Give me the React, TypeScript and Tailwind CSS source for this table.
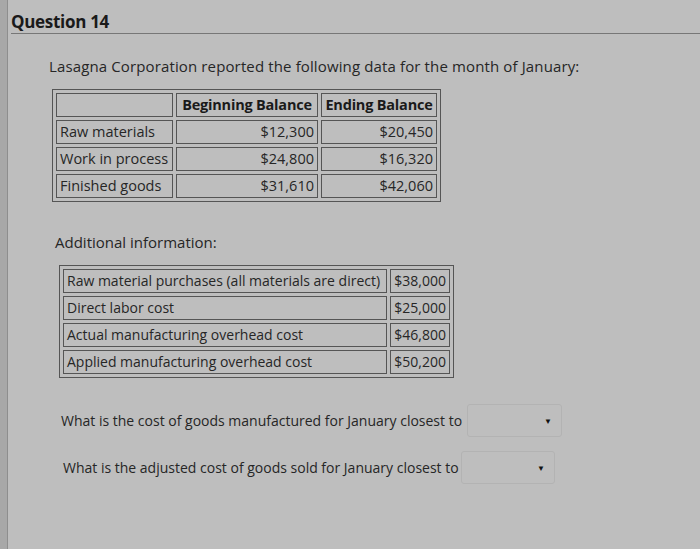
const font = { fontFamily: '"Open Sans", "Noto Sans", sans-serif' };

const balances = [
  { label: "Raw materials", begin: "$12,300", end: "$20,450" },
  { label: "Work in process", begin: "$24,800", end: "$16,320" },
  { label: "Finished goods", begin: "$31,610", end: "$42,060" },
];

const extra = [
  { label: "Raw material purchases (all materials are direct)", value: "$38,000" },
  { label: "Direct labor cost", value: "$25,000" },
  { label: "Actual manufacturing overhead cost", value: "$46,800" },
  { label: "Applied manufacturing overhead cost", value: "$50,200" },
];

const cell = "border border-[#555555] px-[3px] h-[24px] leading-[20px] p-0 whitespace-nowrap";

const Dropdown = ({ width }: { width: string }) => (
  <div className={`${width} h-[33px] shrink-0 rounded-[3px] border border-[#b3b3b3] flex items-center justify-end pr-[9px]`}>
    <span className="text-[8px] text-[#111111] leading-none">▼</span>
  </div>
);

export default function App() {
  return (
    <div
      className="w-[700px] h-[549px] overflow-hidden bg-[#bebebe] text-[#262626] flex"
      style={font}
    >
      <div className="w-[8px] h-full bg-[#a8a8a8] border-r border-[#8e8e8e] shrink-0" />
      <div className="flex-1 flex flex-col">
        <div className="ml-[3px] pt-[12px] pb-[1px] border-b border-[#777777]">
          <h1 className="text-[17px] leading-[20px] font-bold text-[#1a1a1a] tracking-[-0.3px]">
            Question 14
          </h1>
        </div>

        <p className="mt-[22px] ml-[41px] text-[15px] leading-[20px] tracking-[0.13px] whitespace-nowrap">
          Lasagna Corporation reported the following data for the month of January:
        </p>

        <table className="mt-[13px] ml-[44px] border border-[#555555] border-separate border-spacing-[3px] text-[14.5px] w-[389px] table-fixed">
          <tbody>
            <tr>
              <td className={`${cell} w-[117px]`}></td>
              <td className={`${cell} w-[142px] font-bold text-center tracking-[-0.2px] text-[#1a1a1a]`}>Beginning Balance</td>
              <td className={`${cell} font-bold text-center tracking-[-0.2px] text-[#1a1a1a]`}>Ending Balance</td>
            </tr>
            {balances.map((row) => (
              <tr key={row.label}>
                <td className={cell}>{row.label}</td>
                <td className={`${cell} text-right`}>{row.begin}</td>
                <td className={`${cell} text-right`}>{row.end}</td>
              </tr>
            ))}
          </tbody>
        </table>

        <p className="mt-[30px] ml-[47px] text-[15px] leading-[20px]">Additional information:</p>

        <table className="mt-[13px] ml-[51px] border border-[#555555] border-separate border-spacing-[3px] text-[14px] w-[395px] table-fixed">
          <tbody>
            {extra.map((row) => (
              <tr key={row.label}>
                <td className={`${cell} h-[23px]`}>{row.label}</td>
                <td className={`${cell} h-[23px] w-[60px] text-right`}>{row.value}</td>
              </tr>
            ))}
          </tbody>
        </table>

        <div className="mt-[26px] ml-[53px] flex items-center">
          <span className="text-[14px] leading-[20px] w-[406px] shrink-0 whitespace-nowrap">
            What is the cost of goods manufactured for January closest to
          </span>
          <Dropdown width="w-[95px]" />
        </div>

        <div className="mt-[14px] ml-[55px] flex items-center">
          <span className="text-[14px] leading-[20px] w-[398px] shrink-0 whitespace-nowrap">
            What is the adjusted cost of goods sold for January closest to
          </span>
          <Dropdown width="w-[94px]" />
        </div>
      </div>
    </div>
  );
}
